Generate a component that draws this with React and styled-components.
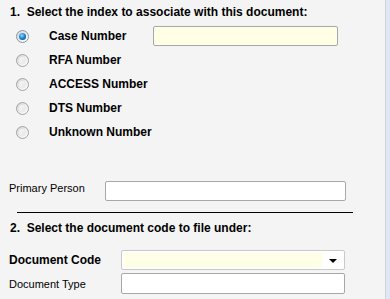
import React, { useState } from "react";
import styled, { createGlobalStyle } from "styled-components";

const GlobalStyle = createGlobalStyle`
  html, body {
    margin: 0;
    padding: 0;
    background: #dfe7f7;
  }
  body {
    font-family: "Liberation Sans", Arial, sans-serif;
    color: #000;
  }
`;

const Panel = styled.div`
  width: 386px;
  height: 299px;
  background-color: #f4f4f4;
  border-right: 1px solid #d4d4d4;
  padding-left: 9px;
  box-sizing: border-box;
  overflow: hidden;
`;

const Heading = styled.div`
  font-size: 12px;
  font-weight: bold;
  height: 24px;
  line-height: 24px;
  padding-left: 1px;
  margin-top: ${(p) => p.$top || 0}px;
  white-space: pre;
`;

const RadioList = styled.div`
  display: flex;
  flex-direction: column;
`;

const RadioRow = styled.label`
  display: grid;
  grid-template-columns: 33px 104px 185px;
  align-items: center;
  height: 24px;
  padding-left: 7px;
  cursor: pointer;
`;

const RadioDot = styled.span`
  box-sizing: border-box;
  width: 13px;
  height: 13px;
  border-radius: 50%;
  border: 1px solid ${(p) => (p.$checked ? "#8496a8" : "#a4a4a4")};
  background: linear-gradient(135deg, #d2d2d2 0%, #ececec 50%, #ffffff 100%);
  display: flex;
  align-items: center;
  justify-content: center;

  &::after {
    content: "";
    display: block;
    width: 7px;
    height: 7px;
    border-radius: 50%;
    background: ${(p) =>
      p.$checked
        ? "radial-gradient(circle at 40% 35%, #8fd8ff 0%, #1a80d2 50%, #0a3a78 100%)"
        : "linear-gradient(135deg, #f8f8f8 0%, #e4e4e4 100%)"};
  }
`;

const BoldLabel = styled.span`
  font-size: 12px;
  font-weight: bold;
  white-space: nowrap;
`;

const TextBox = styled.input`
  box-sizing: border-box;
  width: ${(p) => p.$width}px;
  height: ${(p) => p.$height || 20}px;
  border: 1px solid #a8a8a8;
  border-radius: 2px;
  background-color: ${(p) => (p.$required ? "#ffffe6" : "#ffffff")};
  outline: none;
  padding: 0 3px;
  font-family: inherit;
  font-size: 11px;
`;

const FieldRow = styled.div`
  display: grid;
  grid-template-columns: ${(p) => p.$labelWidth}px auto;
  align-items: ${(p) => p.$align || "center"};
  margin-top: ${(p) => p.$top || 0}px;
`;

const SmallLabel = styled.span`
  font-size: 11px;
  line-height: 14px;
  white-space: nowrap;
`;

const Divider = styled.hr`
  width: 336px;
  margin: 11px 0 0 8px;
  border: none;
  border-top: 1px solid #000;
  height: 0;
`;

const Select = styled.div`
  box-sizing: border-box;
  width: 224px;
  height: 20px;
  border: 1px solid #c9c9c9;
  border-radius: 2px;
  background: #fff;
  display: flex;
  align-items: stretch;
  padding: 2px;
`;

const SelectValue = styled.div`
  flex: 1;
  background: #ffffe6;
`;

const SelectArrow = styled.div`
  width: 19px;
  display: flex;
  align-items: center;
  justify-content: center;
  padding-left: 1px;

  &::after {
    content: "";
    border-left: 4px solid transparent;
    border-right: 4px solid transparent;
    border-top: 4px solid #000;
    margin-top: 1px;
  }
`;

const options = ["Case Number", "RFA Number", "ACCESS Number", "DTS Number", "Unknown Number"];

export default function App() {
  const [choice, setChoice] = useState(0);

  return (
    <>
      <GlobalStyle />
      <Panel>
        <Heading>{"1.  Select the index to associate with this document:"}</Heading>
        <RadioList>
          {options.map((o, i) => (
            <RadioRow key={o} onClick={() => setChoice(i)}>
              <RadioDot $checked={choice === i} />
              <BoldLabel>{o}</BoldLabel>
              {i === 0 && <TextBox $width={185} $required />}
            </RadioRow>
          ))}
        </RadioList>

        <FieldRow $labelWidth={96} $align="start" $top={37}>
          <SmallLabel>Primary Person</SmallLabel>
          <TextBox $width={241} />
        </FieldRow>

        <Divider />

        <Heading $top={3}>{"2.  Select the document code to file under:"}</Heading>

        <FieldRow $labelWidth={112} $top={10}>
          <BoldLabel>Document Code</BoldLabel>
          <Select>
            <SelectValue />
            <SelectArrow />
          </Select>
        </FieldRow>

        <FieldRow $labelWidth={112} $top={3}>
          <SmallLabel>Document Type</SmallLabel>
          <TextBox $width={224} $height={21} />
        </FieldRow>
      </Panel>
    </>
  );
}
